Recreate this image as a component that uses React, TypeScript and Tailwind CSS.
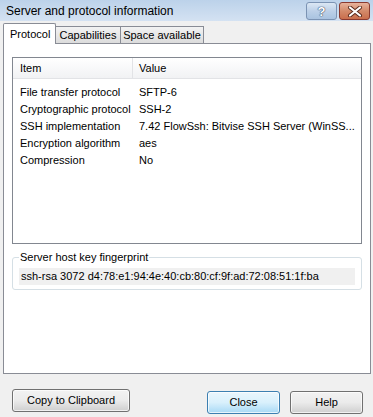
import type { ReactNode } from "react";

const rows: [string, string][] = [
  ["File transfer protocol", "SFTP-6"],
  ["Cryptographic protocol", "SSH-2"],
  ["SSH implementation", "7.42 FlowSsh: Bitvise SSH Server (WinSS..."],
  ["Encryption algorithm", "aes"],
  ["Compression", "No"],
];

function DialogButton({ children, primary, width }: { children: ReactNode; primary?: boolean; width: string }) {
  const tone = primary
    ? "border-[#3c7fb1] bg-gradient-to-b from-[#eaf6fd] via-[#d9f0fc] to-[#a7d9f5]"
    : "border-[#707070] bg-gradient-to-b from-[#f2f2f2] via-[#ebebeb] to-[#cfcfcf]";
  return (
    <button
      type="button"
      className={`${width} h-[23px] rounded-[3px] border text-[11px] text-black shadow-[inset_0_0_0_1px_rgba(255,255,255,0.7)] ${tone}`}
    >
      {children}
    </button>
  );
}

export default function App() {
  return (
    <div className="w-[373px] h-[417px] overflow-hidden bg-[#f0f0f0] font-['Liberation_Sans',Arial,sans-serif] text-black">
      {/* title bar */}
      <div className="h-[21px] flex justify-between bg-gradient-to-b from-[#bcd2ea] to-[#d4e2f2]">
        <span className="pl-[6px] pt-[4px] text-[12px] leading-[15px]">Server and protocol information</span>
        <div className="flex gap-[2px] pt-[2px] pr-[3px]">
          <div className="w-[31px] h-[18px] rounded-[3px] border border-[#7b93b3] bg-gradient-to-b from-[#dbe7f4] via-[#bcd0e8] to-[#a9c3e0] flex items-center justify-center">
            <span className="text-[13px] font-bold leading-none text-white [text-shadow:0_0_1px_#3a4f6b,0_0_1px_#3a4f6b,0_0_1px_#3a4f6b]">?</span>
          </div>
          <div className="w-[31px] h-[18px] rounded-[3px] border border-[#8a3a30] bg-gradient-to-b from-[#e7b29c] via-[#d38a6a] to-[#c96e4c] flex items-center justify-center">
            <svg width="16" height="11" viewBox="0 0 16 11">
              <path d="M3 1.5 L13 9.5 M13 1.5 L3 9.5" stroke="#5a2a1c" strokeWidth="4" strokeLinecap="round" />
              <path d="M3 1.5 L13 9.5 M13 1.5 L3 9.5" stroke="#fff" strokeWidth="2.2" strokeLinecap="round" />
            </svg>
          </div>
        </div>
      </div>

      {/* tabs */}
      <div className="mt-[2px] ml-[3px] h-[20px] flex items-end">
        <div className="relative z-10 w-[53px] h-[21px] -mb-px border-x border-t border-[#898c95] bg-white rounded-t-[2px] text-[11px] leading-[18px] pl-[6px] pt-[1px]">
          Protocol
        </div>
        <div className="w-[65px] h-[17px] border-r border-t border-[#898c95] bg-gradient-to-b from-[#f3f3f3] to-[#dcdcdc] text-[11px] leading-[16px] text-center">
          Capabilities
        </div>
        <div className="w-[83px] h-[17px] border-r border-t border-[#898c95] bg-gradient-to-b from-[#f3f3f3] to-[#dcdcdc] text-[11px] leading-[16px] text-center">
          Space available
        </div>
      </div>

      {/* tab panel */}
      <div className="ml-[3px] w-[368px] h-[331px] border border-[#898c95] bg-white pl-[8px] pt-[13px]">
        <div className="w-[350px] h-[187px] border border-[#828790] text-[11px]">
          <div className="flex h-[21px] bg-gradient-to-b from-white to-[#f1f2f4] border-b border-[#e2e3e6]">
            <div className="w-[120px] pl-[7px] leading-[20px] border-r border-[#e2e3e6]">Item</div>
            <div className="pl-[6px] leading-[20px]">Value</div>
          </div>
          <div className="pt-[5px]">
            {rows.map(([item, value]) => (
              <div key={item} className="flex h-[17px] leading-[17px] whitespace-nowrap">
                <div className="w-[121px] pl-[7px]">{item}</div>
                <div className="pl-[5px]">{value}</div>
              </div>
            ))}
          </div>
        </div>

        <fieldset className="mt-[7px] w-[350px] border border-[#d5dfe5] rounded-[3px] px-[6px] pb-[4px]">
          <legend className="px-[1px] text-[11px] leading-[13px]">Server host key fingerprint</legend>
          <div className="mt-[4px] h-[17px] bg-[#f0f0f0] pl-[2px] text-[11px] leading-[17px]">
            ssh-rsa 3072 d4:78:e1:94:4e:40:cb:80:cf:9f:ad:72:08:51:1f:ba
          </div>
        </fieldset>
      </div>

      {/* buttons */}
      <div className="mt-[15px] pl-[12px] flex">
        <DialogButton width="w-[118px]">Copy to Clipboard</DialogButton>
        <div className="ml-[77px]">
          <DialogButton primary width="w-[73px]">Close</DialogButton>
        </div>
        <div className="ml-[10px]">
          <DialogButton width="w-[73px]">Help</DialogButton>
        </div>
      </div>
    </div>
  );
}
